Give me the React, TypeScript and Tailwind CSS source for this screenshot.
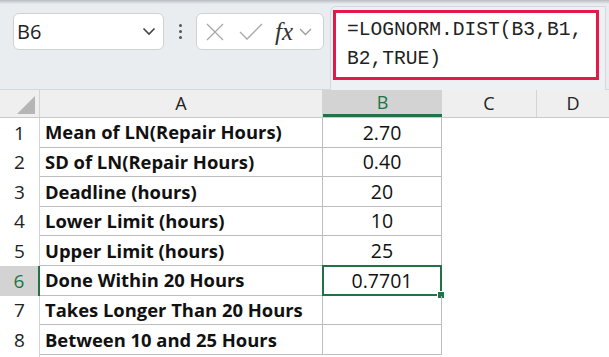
import React from "react";

const rows: { label: string; value: string }[] = [
  { label: "Mean of LN(Repair Hours)", value: "2.70" },
  { label: "SD of LN(Repair Hours)", value: "0.40" },
  { label: "Deadline (hours)", value: "20" },
  { label: "Lower Limit (hours)", value: "10" },
  { label: "Upper Limit (hours)", value: "25" },
  { label: "Done Within 20 Hours", value: "0.7701" },
  { label: "Takes Longer Than 20 Hours", value: "" },
  { label: "Between 10 and 25 Hours", value: "" },
];

const cellFont = { fontFamily: "'Open Sans', sans-serif" };

export default function App() {
  return (
    <div className="w-[609px] h-[357px] overflow-hidden bg-white relative" style={cellFont}>
      {/* Toolbar */}
      <div className="h-[90px] bg-[#e9edf0] relative border-b border-[#d3d7db]">
        <div className="absolute top-0 left-0 right-0 h-[4px] bg-gradient-to-b from-[#b9bdc1] to-[#e9edf0]" />
        <div className="flex items-start pt-[13px] pl-[13px]">
          {/* Name box */}
          <div className="w-[151px] h-[37px] rounded-[6px] border border-[#cfd2d5] bg-white flex items-center justify-between pl-[3px] pr-[7px]">
            <span className="text-[20px] text-[#222]" style={{ fontFamily: "'Open Sans', sans-serif" }}>B6</span>
            <svg width="14" height="9" viewBox="0 0 14 9">
              <path d="M1.5 1.5 L7 7 L12.5 1.5" fill="none" stroke="#444" strokeWidth="1.6" />
            </svg>
          </div>
          {/* dots */}
          <div className="w-[32px] h-[37px] flex flex-col items-center justify-center gap-[3px]">
            <div className="w-[3px] h-[3px] bg-[#555] rounded-full" />
            <div className="w-[3px] h-[3px] bg-[#555] rounded-full" />
            <div className="w-[3px] h-[3px] bg-[#555] rounded-full" />
          </div>
          {/* function box */}
          <div className="w-[128px] h-[37px] rounded-[6px] border border-[#cfd2d5] bg-white flex items-center pl-[9px]">
            <svg width="18" height="18" viewBox="0 0 18 18">
              <path d="M1 1 L17 17 M17 1 L1 17" fill="none" stroke="#a8a8a8" strokeWidth="1.3" />
            </svg>
            <svg width="24" height="18" viewBox="0 0 24 18" className="ml-[15px]">
              <path d="M1 9 L8 16 L23 1" fill="none" stroke="#a8a8a8" strokeWidth="1.3" />
            </svg>
            <span className="ml-[12px] text-[25px] italic text-[#333] leading-none" style={{ fontFamily: "'Liberation Serif', serif" }}>fx</span>
            <svg width="13" height="8" viewBox="0 0 13 8" className="ml-[6px]">
              <path d="M1 1 L6.5 6.5 L12 1" fill="none" stroke="#9a9a9a" strokeWidth="1.3" />
            </svg>
          </div>
        </div>
        {/* formula bar */}
        <div className="absolute left-[330px] top-[6px] w-[276px] h-[84px] rounded-tl-[6px] border-l border-t border-r border-[#d6d9dc] bg-[#eef1f3]" />
        <div
          className="absolute left-[333px] top-[10px] w-[266px] h-[70px] border-[3px] border-[#e3194b] bg-white pl-[11px] pt-[3px] text-[19.6px] leading-[29px] text-[#222]"
          style={{ fontFamily: "'Liberation Mono', monospace" }}
        >
          <div>=LOGNORM.DIST(B3,B1,</div>
          <div>B2,TRUE)</div>
        </div>
      </div>

      {/* Column header row */}
      <div className="flex h-[28px] bg-[#efefef] border-b border-[#c9c9c9] text-[18px] text-[#222]">
        <div className="w-[40px] relative border-r border-[#d4d4d4]">
          <svg width="18" height="18" viewBox="0 0 18 18" className="absolute left-[17px] top-[6px]">
            <path d="M18 0 L18 18 L0 18 Z" fill="#b5b5b5" />
          </svg>
        </div>
        <div className="w-[283px] flex items-center justify-center border-r border-[#d4d4d4]">A</div>
        <div className="w-[119px] flex items-center justify-center bg-[#d3d3d3] text-[#217346] border-b-[3px] border-[#217346] relative">B</div>
        <div className="w-[95px] flex items-center justify-center border-r border-[#d4d4d4]">C</div>
        <div className="flex-1 flex items-center justify-center">D</div>
      </div>

      {/* Rows */}
      <div className="flex flex-col">
        {rows.map((r, i) => {
          const sel = i === 5;
          return (
            <div key={i} className="flex h-[29.6px]">
              <div
                className={
                  sel
                    ? "w-[40px] flex items-center justify-center bg-[#d3d3d3] text-[#217346] border-r-2 border-[#217346] text-[19px]"
                    : "w-[40px] flex items-center justify-center bg-white text-[#222] border-r border-[#d4d4d4] text-[19px]"
                }
              >
                {i + 1}
              </div>
              <div className="w-[283px] flex items-center pl-[5px] font-bold text-[18.4px] text-[#111] border-r border-b border-[#bdbdbd] whitespace-nowrap">
                {r.label}
              </div>
              <div className="w-[119px] relative flex items-center justify-center text-[19.5px] text-[#111] border-r border-b border-[#bdbdbd]">
                {r.value}
                {sel && (
                  <>
                    <div className="absolute -left-[1px] -top-[1px] -right-[1px] -bottom-[1px] border-2 border-[#217346]" />
                    <div className="absolute -right-[4px] -bottom-[4px] w-[6px] h-[6px] bg-[#217346] border border-white box-content" />
                  </>
                )}
              </div>
              <div className="flex-1" />
            </div>
          );
        })}
        <div className="flex h-[30px]">
          <div className="w-[40px] border-r border-[#d4d4d4]" />
        </div>
      </div>
    </div>
  );
}
